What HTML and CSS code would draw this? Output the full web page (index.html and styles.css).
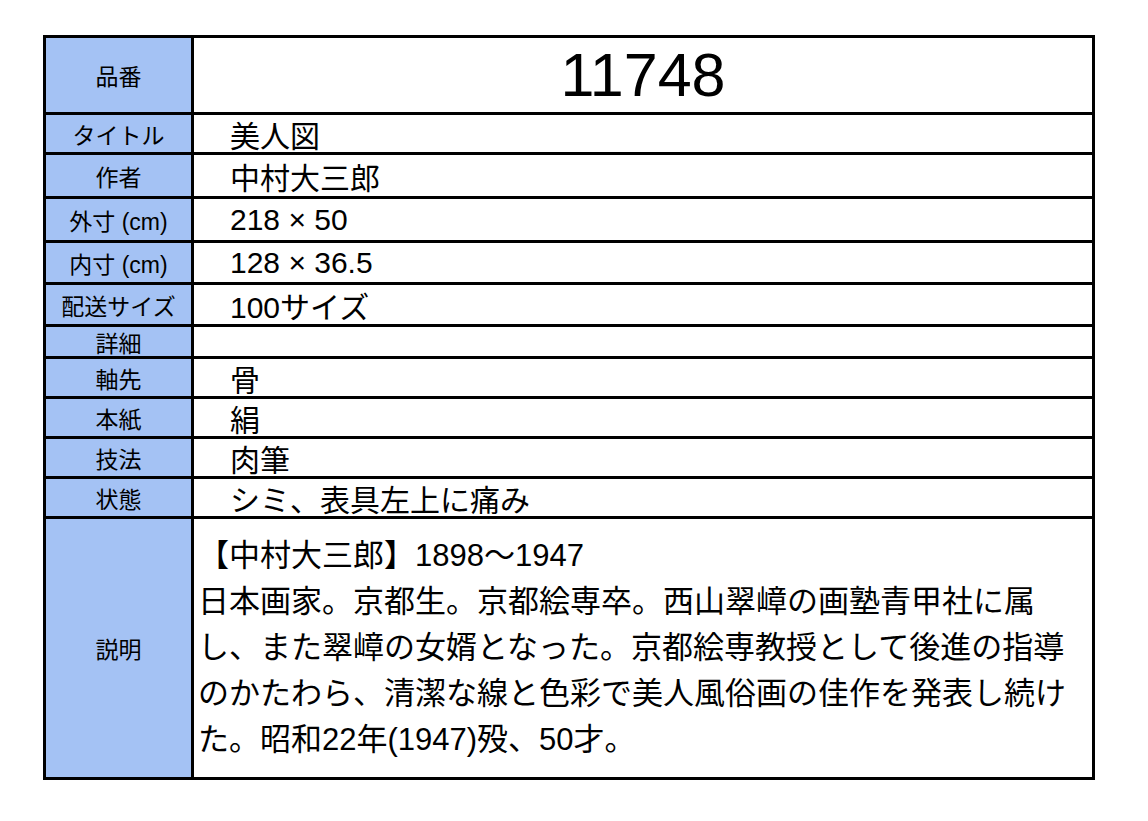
FILE: index.html
```html
<!DOCTYPE html>
<html lang="ja">
<head>
<meta charset="utf-8">
<title>11748</title>
<link rel="stylesheet" href="styles.css">
</head>
<body>
<div class="sheet">
  <div class="label r-no">品番</div>
  <div class="value number">11748</div>

  <div class="label">タイトル</div>
  <div class="value">美人図</div>

  <div class="label">作者</div>
  <div class="value">中村大三郎</div>

  <div class="label">外寸 (cm)</div>
  <div class="value">218 × 50</div>

  <div class="label">内寸 (cm)</div>
  <div class="value">128 × 36.5</div>

  <div class="label">配送サイズ</div>
  <div class="value">100サイズ</div>

  <div class="label">詳細</div>
  <div class="value"></div>

  <div class="label">軸先</div>
  <div class="value">骨</div>

  <div class="label">本紙</div>
  <div class="value">絹</div>

  <div class="label">技法</div>
  <div class="value">肉筆</div>

  <div class="label">状態</div>
  <div class="value">シミ、表具左上に痛み</div>

  <div class="label">説明</div>
  <div class="value desc">
    <p class="line">【中村大三郎】1898～1947</p>
    <p class="line">日本画家。京都生。京都絵専卒。西山翠嶂の画塾青甲社に属</p>
    <p class="line">し、また翠嶂の女婿となった。京都絵専教授として後進の指導</p>
    <p class="line">のかたわら、清潔な線と色彩で美人風俗画の佳作を発表し続け</p>
    <p class="line">た。昭和22年(1947)殁、50才。</p>
  </div>
</div>
</body>
</html>
```

FILE: styles.css
```css
html, body {
  margin: 0;
  padding: 0;
  background: #ffffff;
}

body {
  font-family: "Liberation Sans", "Noto Sans CJK JP", sans-serif;
  color: #000000;
}

.sheet {
  margin: 35px 0 0 43px;
  width: 1046px;
  display: grid;
  grid-template-columns: 145px 898px;
  grid-template-rows: 74px 37px 41px 41px 39px 39px 29px 37px 37px 37px 37px 258px;
  gap: 3px;
  padding: 3px;
  background: #000000;
}

.label {
  background: #a4c2f4;
  display: flex;
  align-items: center;
  justify-content: center;
  font-size: 23px;
  white-space: nowrap;
}

.value {
  background: #ffffff;
  display: flex;
  align-items: center;
  padding-left: 36px;
  font-size: 30px;
  white-space: nowrap;
}

.number {
  justify-content: center;
  padding-left: 0;
  font-size: 61px;
}

.desc {
  display: block;
  padding: 14px 0 0 4px;
  font-size: 31px;
}

.line {
  margin: 0;
  line-height: 46px;
  white-space: nowrap;
}
```
